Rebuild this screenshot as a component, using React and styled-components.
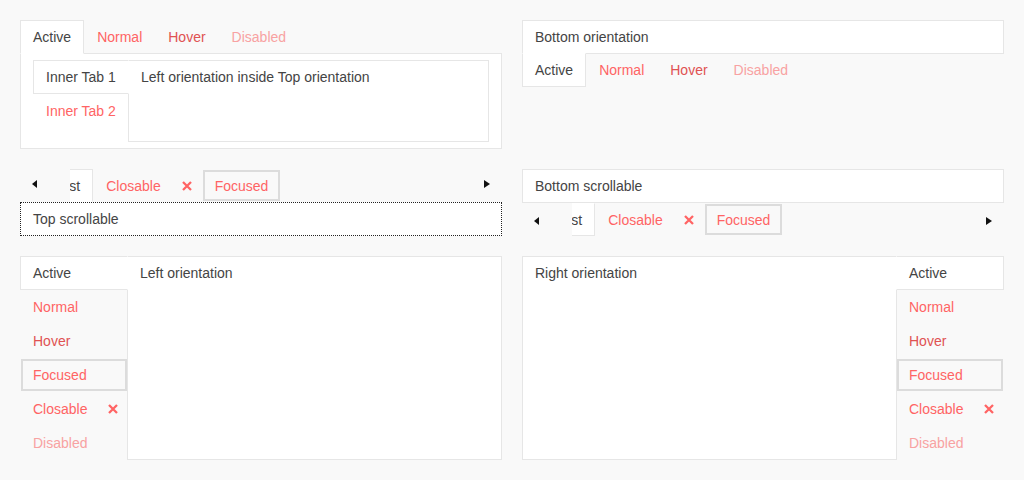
import React from 'react';
import styled, { createGlobalStyle, css } from 'styled-components';

const GlobalStyle = createGlobalStyle`
  body {
    margin: 0;
    background: #f9f9f9;
    font-family: "Liberation Sans", Arial, sans-serif;
    font-size: 14px;
    color: #444;
  }
`;

const tabColors = {
  active: '#444',
  normal: '#ff6464',
  hover: '#e05252',
  focused: '#ff6464',
  closable: '#ff6464',
  disabled: '#f8a2a2',
};

const Page = styled.div`
  display: grid;
  grid-template-columns: 482px 482px;
  gap: 20px;
  padding: 20px;
  align-items: start;
`;

const Section = styled.div`
  display: flex;
  flex-direction: ${p => p.$dir || 'column'};
`;

const TabRow = styled.div`
  display: flex;
  height: ${p => p.$h || 34}px;
  margin-${p => p.$overlap || 'bottom'}: ${p => (p.$overlap ? -1 : 0)}px;
`;

const TabColumn = styled.div`
  display: flex;
  flex-direction: column;
  flex: none;
  width: ${p => p.$w}px;
  margin-${p => p.$overlap}: -1px;
`;

const Tab = styled.div`
  position: relative;
  display: flex;
  align-items: center;
  flex: none;
  box-sizing: border-box;
  height: ${p => p.$h || 34}px;
  padding: 0 ${p => (p.$closable ? 9 : 12)}px 0 12px;
  border: 1px solid transparent;
  color: ${p => tabColors[p.$state]};
  white-space: nowrap;
  cursor: ${p => (p.$state === 'disabled' ? 'default' : 'pointer')};

  ${p => p.$state === 'active' && css`
    z-index: 1;
    background: #fff;
    border-color: #e6e6e6;
    border-${p.$open}-color: #fff;
  `}

  ${p => p.$state === 'focused' && css`
    margin: 1px;
    height: ${(p.$h || 34) - 2}px;
    padding: 0 10px;
    border: 2px solid #dcdcdc;
  `}
`;

const CloseMark = styled.span`
  display: flex;
  margin-left: auto;
  padding-left: 21px;
  color: #ff6464;
`;

const Panel = styled.div`
  background: #fff;
  border: 1px solid #e6e6e6;
  padding: 6px 12px;
`;

const Content = styled.div`
  flex: 1;
  min-height: ${p => p.$min || 0}px;
  box-sizing: border-box;
  background: #fff;
  border: 1px ${p => (p.$focus ? 'dotted #222' : 'solid #e6e6e6')};
  padding: 0 12px;
  line-height: 32px;
  color: #444;
`;

const ArrowButton = styled.div`
  flex: none;
  box-sizing: border-box;
  width: ${p => p.$w}px;
  padding-left: ${p => p.$pad}px;
  padding-top: ${p => p.$top}px;
`;

const Triangle = styled.span`
  display: block;
  width: 0;
  height: 0;
  border-top: 4px solid transparent;
  border-bottom: 4px solid transparent;
  ${p => (p.$dir === 'left' ? 'border-right: 5px solid #111;' : 'border-left: 6px solid #111;')}
`;

const Viewport = styled.div`
  flex: 1;
  overflow: hidden;
  display: flex;
`;

// scrolled a little so the first tab is partly hidden
const Track = styled.div`
  display: flex;
  margin-left: -30px;
`;

const CloseIcon = () => (
  <svg width="10" height="10" viewBox="0 0 10 10">
    <path d="M1 1 L9 9 M9 1 L1 9" stroke="currentColor" strokeWidth="2.3" fill="none" />
  </svg>
);

const ClosableTab = ({ h, open }) => (
  <Tab $state="closable" $closable $h={h} $open={open}>
    Closable
    <CloseMark><CloseIcon /></CloseMark>
  </Tab>
);

const VerticalTabs = ({ open }) => (
  <>
    <Tab $state="active" $open={open}>Active</Tab>
    <Tab $state="normal">Normal</Tab>
    <Tab $state="hover">Hover</Tab>
    <Tab $state="focused">Focused</Tab>
    <ClosableTab open={open} />
    <Tab $state="disabled">Disabled</Tab>
  </>
);

const ScrollTabs = ({ open, top }) => (
  <TabRow $h={33}>
    <ArrowButton $w={50} $pad={12} $top={top}><Triangle $dir="left" /></ArrowButton>
    <Viewport>
      <Track>
        <Tab $state="active" $h={33} $open={open}>First</Tab>
        <ClosableTab h={33} open={open} />
        <Tab $state="focused" $h={33}>Focused</Tab>
      </Track>
    </Viewport>
    <ArrowButton $w={38} $pad={20} $top={top}><Triangle $dir="right" /></ArrowButton>
  </TabRow>
);

export default function App() {
  return (
    <Page>
      <GlobalStyle />

      <Section>
        <TabRow $overlap="bottom">
          <Tab $state="active" $open="bottom">Active</Tab>
          <Tab $state="normal">Normal</Tab>
          <Tab $state="hover">Hover</Tab>
          <Tab $state="disabled">Disabled</Tab>
        </TabRow>
        <Panel>
          <Section $dir="row">
            <TabColumn $w={96} $overlap="right">
              <Tab $state="active" $open="right">Inner Tab 1</Tab>
              <Tab $state="normal">Inner Tab 2</Tab>
            </TabColumn>
            <Content $min={82}>Left orientation inside Top orientation</Content>
          </Section>
        </Panel>
      </Section>

      <Section>
        <Content>Bottom orientation</Content>
        <TabRow $overlap="top">
          <Tab $state="active" $open="top">Active</Tab>
          <Tab $state="normal">Normal</Tab>
          <Tab $state="hover">Hover</Tab>
          <Tab $state="disabled">Disabled</Tab>
        </TabRow>
      </Section>

      <Section>
        <ScrollTabs open="bottom" top={11} />
        <Content $focus>Top scrollable</Content>
      </Section>

      <Section>
        <Content>Bottom scrollable</Content>
        <ScrollTabs open="top" top={14} />
      </Section>

      <Section $dir="row">
        <TabColumn $w={108} $overlap="right">
          <VerticalTabs open="right" />
        </TabColumn>
        <Content>Left orientation</Content>
      </Section>

      <Section $dir="row">
        <Content>Right orientation</Content>
        <TabColumn $w={108} $overlap="left">
          <VerticalTabs open="left" />
        </TabColumn>
      </Section>
    </Page>
  );
}
